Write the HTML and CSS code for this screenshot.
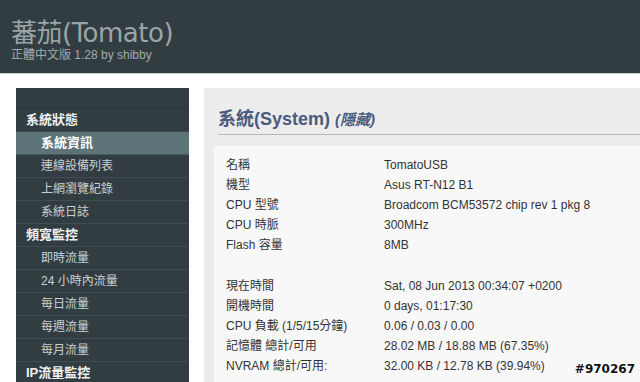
FILE: index.html
```html
<html lang="zh-Hant">
<head>
  <meta charset="UTF-8">
  <title>Tomato 系統資訊</title>
  <link rel="stylesheet" href="styles.css">
</head>
<body>
  <!-- Header -->
  <div class="header">
    <div class="title">蕃茄(Tomato)</div>
    <div class="version">正體中文版 1.28 by shibby</div>
  </div>

  <div class="wrap">
    <!-- Left menu -->
    <div class="menu">
      <div class="menu-top"></div>
      <div class="menu-row section">系統狀態</div>
      <div class="menu-row sub active">系統資訊</div>
      <div class="menu-row sub">連線設備列表</div>
      <div class="menu-row sub">上網瀏覽紀錄</div>
      <div class="menu-row sub">系統日誌</div>
      <div class="menu-row section">頻寬監控</div>
      <div class="menu-row sub">即時流量</div>
      <div class="menu-row sub">24 小時內流量</div>
      <div class="menu-row sub">每日流量</div>
      <div class="menu-row sub">每週流量</div>
      <div class="menu-row sub">每月流量</div>
      <div class="menu-row section">IP流量監控</div>
    </div>

    <!-- Main content -->
    <div class="content">
      <div class="section-title">系統(System) <i class="hidden-link">(隱藏)</i></div>
      <div class="box">
        <div class="info-row"><span class="label">名稱</span><span>TomatoUSB</span></div>
        <div class="info-row"><span class="label">機型</span><span>Asus RT-N12 B1</span></div>
        <div class="info-row"><span class="label">CPU 型號</span><span>Broadcom BCM53572 chip rev 1 pkg 8</span></div>
        <div class="info-row"><span class="label">CPU 時脈</span><span>300MHz</span></div>
        <div class="info-row"><span class="label">Flash 容量</span><span>8MB</span></div>
        <div class="spacer"></div>
        <div class="info-row"><span class="label">現在時間</span><span>Sat, 08 Jun 2013 00:34:07 +0200</span></div>
        <div class="info-row"><span class="label">開機時間</span><span>0 days, 01:17:30</span></div>
        <div class="info-row"><span class="label">CPU 負載 (1/5/15分鐘)</span><span>0.06 / 0.03 / 0.00</span></div>
        <div class="info-row"><span class="label">記憶體 總計/可用</span><span>28.02 MB / 18.88 MB (67.35%)</span></div>
        <div class="info-row"><span class="label">NVRAM 總計/可用:</span><span>32.00 KB / 12.78 KB (39.94%)</span></div>
      </div>
    </div>
  </div>

  <div class="stamp">#970267</div>
</body>
</html>
```

FILE: styles.css
```css
body {
  margin: 0;
  background: #fff;
  font-family: "Liberation Sans", "Noto Sans CJK TC", sans-serif;
  overflow: hidden;
  height: 382px;
}

/* Header bar */
.header {
  background: #323d42;
  height: 74px;
  border-bottom: 1px solid #c5cfcf;
  padding-left: 11px;
  box-sizing: border-box;
  color: #9ba5a8;
}

.title {
  font-family: "DejaVu Sans", "Noto Sans CJK TC", sans-serif;
  font-size: 26px;
  padding-top: 18px;
  line-height: 30px;
  letter-spacing: -0.5px;
}

.version {
  font-size: 12px;
  line-height: 14px;
  color: #a2abae;
}

.wrap {
  display: flex;
  padding: 14px 0 0 16px;
  gap: 15px;
}

/* Left menu */
.menu {
  width: 173px;
  flex: none;
  background: #323d42;
}

.menu-top {
  height: 20px;
  border-bottom: 1px solid #2a3337;
}

.menu-row {
  height: 22px;
  line-height: 22px;
  border-bottom: 1px solid #414d52;
  font-size: 12px;
  color: #c9d0d2;
  white-space: nowrap;
}

.menu-row.section {
  padding-left: 10px;
  font-weight: bold;
  font-size: 13px;
  color: #eef1f1;
}

.menu-row.sub {
  padding-left: 25px;
}

.menu-row.section:first-of-type,
.menu-row.active {
  background: #5c7377;
  border-bottom-color: #48595d;
}

.menu-row.active {
  color: #fff;
  font-weight: bold;
  font-size: 13px;
}

/* Main panel */
.content {
  flex: 1;
  background: #ececec;
  padding: 19px 0 0 10px;
}

.section-title {
  margin-left: 4px;
  font-size: 18px;
  font-weight: bold;
  color: #4b5b7d;
  line-height: 24px;
  padding-bottom: 2px;
  border-bottom: 1px solid #b9b9b9;
}

.hidden-link {
  font-size: 15px;
}

.box {
  margin-top: 11px;
  background: #f8f8f8;
  padding: 9px 0 10px 12px;
}

.info-row {
  display: flex;
  height: 20px;
  line-height: 20px;
  font-size: 12px;
  color: #333;
}

.label {
  width: 158px;
  flex: none;
}

.spacer {
  height: 21px;
}

.stamp {
  position: absolute;
  right: 5px;
  top: 362px;
  font-family: "DejaVu Sans", sans-serif;
  font-weight: bold;
  font-size: 12px;
  color: #111;
  text-shadow: 1px 0 #fff, -1px 0 #fff, 0 1px #fff, 0 -1px #fff;
}
```
